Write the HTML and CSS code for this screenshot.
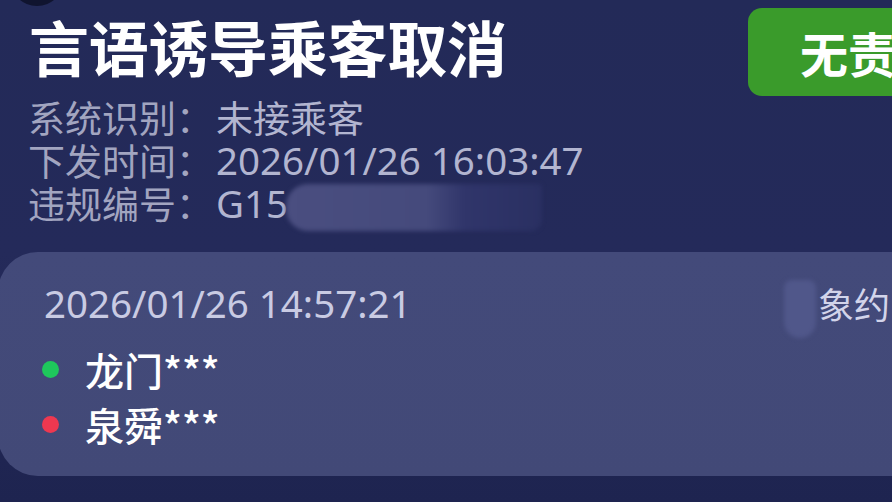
FILE: index.html
```html
<!DOCTYPE html>
<html lang="zh-CN">
<head>
<meta charset="utf-8">
<link rel="stylesheet" href="styles.css">
</head>
<body>
<div class="screen">
  <div class="deco-circle"></div>
  <header class="head">
    <div class="titles">
      <h1 class="title">言语诱导乘客取消</h1>
      <div class="info">
        <div class="row"><span class="label">系统识别：</span><span class="val">未接乘客</span></div>
        <div class="row"><span class="label">下发时间：</span><span class="val num">2026/01/26 16:03:47</span></div>
        <div class="row"><span class="label">违规编号：</span><span class="val num">G15</span><span class="mask"></span></div>
      </div>
    </div>
    <div class="badge">无责</div>
  </header>
  <section class="card">
    <div class="card-top">
      <span class="card-time">2026/01/26 14:57:21</span>
      <span class="card-tag"><span class="tag-blur"></span>象约</span>
    </div>
    <ul class="route">
      <li class="stop"><span class="dot dot-start"></span><span class="place">龙门***</span></li>
      <li class="stop"><span class="dot dot-end"></span><span class="place">泉舜***</span></li>
    </ul>
  </section>
</div>
</body>
</html>
```
FILE: styles.css
```css
html, body {
  margin: 0;
  padding: 0;
  width: 892px;
  height: 502px;
  overflow: hidden;
  background: #1d2249;
}
.screen {
  position: relative;
  width: 960px;
  height: 502px;
  background: linear-gradient(180deg, #232a58 0%, #242a5a 50%, #1e2450 100%);
  font-family: "Noto Sans CJK SC", "Noto Sans", sans-serif;
  overflow: hidden;
}
.deco-circle {
  position: absolute;
  left: 10px;
  top: -48px;
  width: 54px;
  height: 54px;
  border-radius: 50%;
  background: #10142f;
}
.head {
  display: flex;
  justify-content: space-between;
  align-items: flex-start;
  padding: 8px 0 0 29px;
}
.titles {
  display: flex;
  flex-direction: column;
}
.title {
  margin: 0;
  font-size: 60px;
  line-height: 76px;
  font-weight: 700;
  color: #ffffff;
  letter-spacing: -0.3px;
}
.info {
  display: flex;
  flex-direction: column;
  margin-top: 12px;
}
.row {
  display: flex;
  align-items: center;
  height: 43px;
  line-height: 43px;
  font-size: 37px;
  color: #a6a9c4;
  white-space: nowrap;
}
.label {
  color: #a2a5c0;
  margin-left: -1px;
}
.val {
  color: #b2b5d0;
  margin-left: 3px;
}
.num {
  font-family: "Noto Sans", "Noto Sans CJK SC", sans-serif;
  font-size: 38.5px;
}
.mask {
  width: 256px;
  height: 47px;
  margin-left: -2px;
  margin-top: 8px;
  border-radius: 22px 4px 12px 22px;
  background: linear-gradient(90deg, #4a4e80 0%, #454a7c 55%, #30356a 70%, #2a3062 100%);
  filter: blur(2px);
}
.badge {
  width: 212px;
  height: 88px;
  border-radius: 14px;
  background: #3a9b2b;
  color: #ffffff;
  font-size: 48px;
  font-weight: 700;
  line-height: 88px;
  padding-left: 52px;
  box-sizing: border-box;
}
.card {
  margin-top: 27px;
  margin-left: -2px;
  height: 224px;
  border-radius: 40px 0 0 40px;
  background: linear-gradient(180deg, #434a7a 0%, #424977 100%);
  padding: 26px 0 0 46px;
  box-sizing: border-box;
}
.card-top {
  display: flex;
  justify-content: space-between;
  align-items: center;
  height: 50px;
  line-height: 50px;
}
.card-time {
  font-family: "Noto Sans", "Noto Sans CJK SC", sans-serif;
  font-size: 38.5px;
  color: #c9cbe3;
}
.card-tag {
  display: flex;
  align-items: center;
  font-size: 36px;
  color: #d2d4ea;
  padding-right: 70px;
}
.tag-blur {
  width: 32px;
  height: 58px;
  margin-right: 2px;
  margin-top: 12px;
  border-radius: 8px 8px 16px 16px;
  background: #50578a;
  filter: blur(2px);
}
.route {
  list-style: none;
  margin: 14px 0 0 -2px;
  padding: 0;
  display: flex;
  flex-direction: column;
}
.stop {
  display: flex;
  align-items: center;
  height: 55px;
  line-height: 55px;
}
.dot {
  width: 17px;
  height: 17px;
  border-radius: 50%;
  margin-right: 26px;
}
.dot-start { background: #1ec75c; }
.dot-end { background: #ee3850; }
.place {
  font-size: 39px;
  color: #ffffff;
  font-weight: 500;
}
```
